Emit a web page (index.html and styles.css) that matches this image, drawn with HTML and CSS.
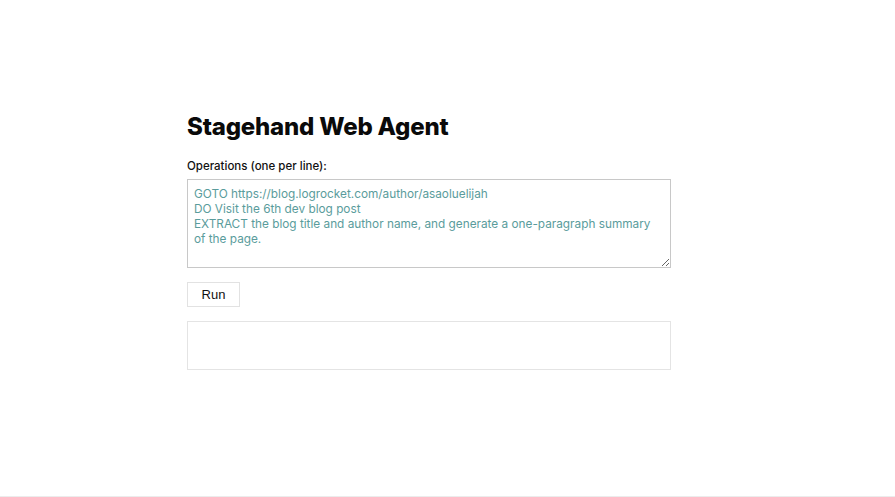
FILE: index.html
```html
<!DOCTYPE html>
<html lang="en">
<head>
<meta charset="utf-8">
<title>Stagehand Web Agent</title>
<link rel="stylesheet" href="styles.css">
</head>
<body>
<main class="page">
  <div class="container">
    <h1 class="title">Stagehand Web Agent</h1>
    <label class="label" for="ops">Operations (one per line):</label>
    <textarea id="ops" class="ops">GOTO https://blog.logrocket.com/author/asaoluelijah
DO Visit the 6th dev blog post
EXTRACT the blog title and author name, and generate a one-paragraph summary of the page.</textarea>
    <div class="actions">
      <button class="run" type="button">Run</button>
    </div>
    <div class="output"></div>
  </div>
</main>
</body>
</html>
```

FILE: styles.css
```css
* { box-sizing: border-box; }
html, body { margin: 0; padding: 0; background: #fff; }
.page {
  min-height: 497px;
  border-bottom: 1px solid #ececec;
}
.container {
  width: 484px;
  margin-left: 187px;
  padding-top: 112px;
  display: flex;
  flex-direction: column;
  align-items: flex-start;
}
.title {
  margin: 0;
  font-family: Inter, "Noto Sans", sans-serif;
  font-weight: 800;
  font-size: 24px;
  line-height: 29px;
  letter-spacing: -0.2px;
  color: #0a0a0a;
}
.label {
  margin-top: 17px;
  font-family: Inter, "Noto Sans", sans-serif;
  font-weight: 500;
  font-size: 11.5px;
  line-height: 16px;
  color: #111;
}
.ops {
  margin-top: 5px;
  width: 484px;
  height: 89px;
  padding: 7px 12px 7px 6px;
  border: 1px solid #c8c8c8;
  border-radius: 0;
  font-family: Inter, "Noto Sans", sans-serif;
  font-size: 11.8px;
  line-height: 15px;
  color: #5a9c9c;
  resize: vertical;
  outline: none;
}
.actions {
  margin-top: 14px;
  display: flex;
}
.run {
  width: 53px;
  height: 25px;
  padding: 0;
  background: #fff;
  border: 1px solid #e2e2e2;
  border-radius: 0;
  font-family: "Liberation Sans", Arial, sans-serif;
  font-size: 13px;
  color: #111;
}
.output {
  margin-top: 14px;
  width: 484px;
  height: 49px;
  border: 1px solid #e4e4e4;
}
```
